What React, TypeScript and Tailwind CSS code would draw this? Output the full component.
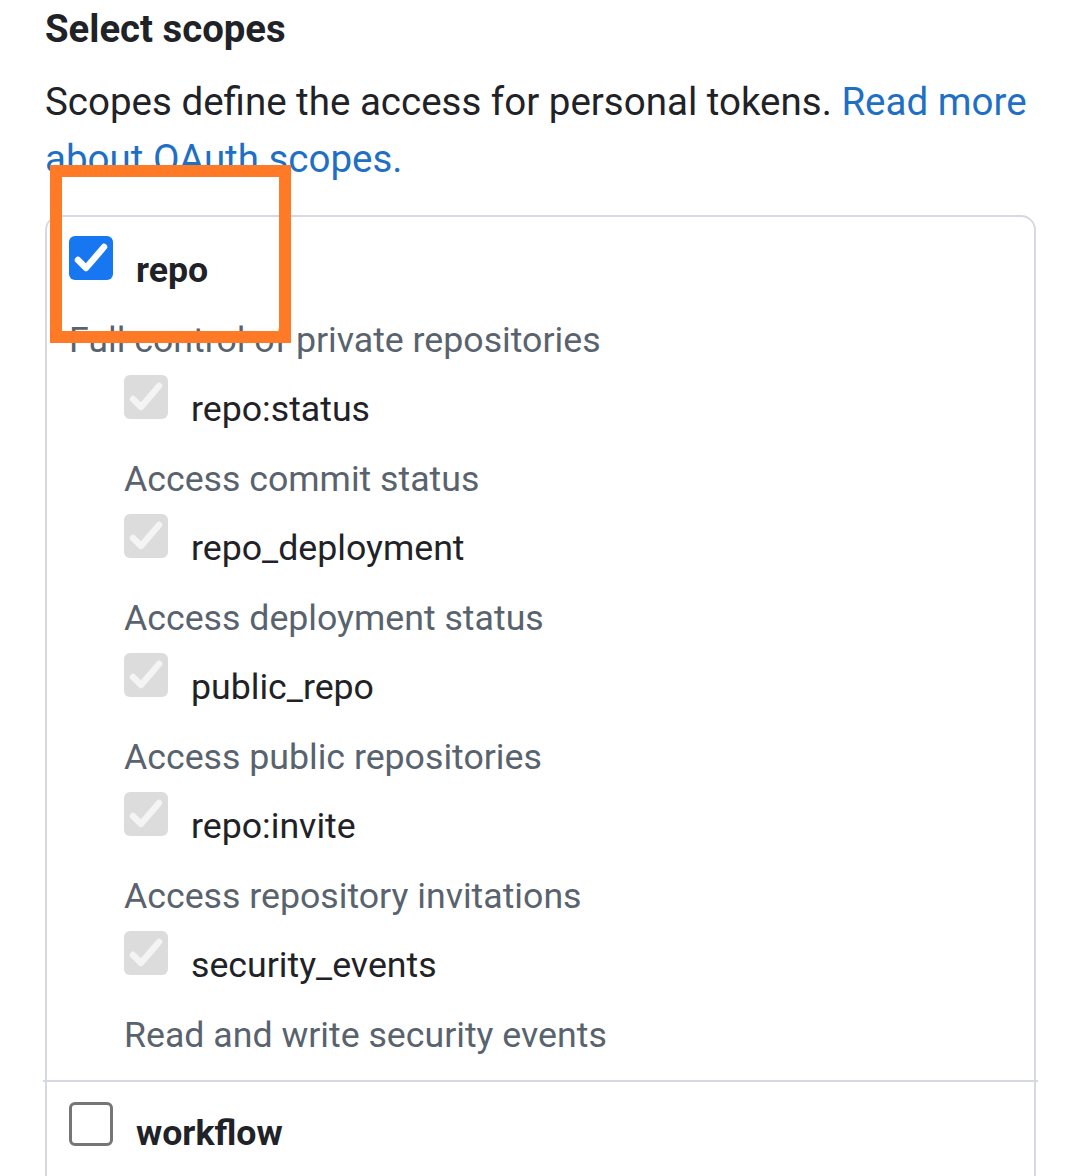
const scopes = [
  { name: "repo:status", desc: "Access commit status" },
  { name: "repo_deployment", desc: "Access deployment status" },
  { name: "public_repo", desc: "Access public repositories" },
  { name: "repo:invite", desc: "Access repository invitations" },
  { name: "security_events", desc: "Read and write security events" },
];

function CheckMark({ color }: { color: string }) {
  return (
    <svg viewBox="0 0 44 44" className="w-[44px] h-[44px]">
      <polyline
        points="9,24 17,32 35,11"
        fill="none"
        stroke={color}
        strokeWidth="6.5"
        strokeLinecap="round"
        strokeLinejoin="round"
      />
    </svg>
  );
}

function Box({ state }: { state: "checked" | "disabled" | "empty" }) {
  if (state === "checked") {
    return (
      <div className="w-[44px] h-[44px] shrink-0 rounded-[6px] bg-[#1677f0]">
        <CheckMark color="#ffffff" />
      </div>
    );
  }
  if (state === "disabled") {
    return (
      <div className="w-[44px] h-[44px] shrink-0 rounded-[6px] bg-[#dcdcdc]">
        <CheckMark color="#f4f4f4" />
      </div>
    );
  }
  return (
    <div className="w-[44px] h-[44px] shrink-0 rounded-[6px] border-[3px] border-[#767676] bg-white" />
  );
}

export default function App() {
  return (
    <div
      className="relative w-[1080px] h-[1176px] overflow-hidden bg-white text-[#1f2328]"
      style={{ fontFamily: "Roboto, 'Noto Sans', sans-serif" }}
    >
      <div className="pl-[45px] pr-[44px] pt-[7px]">
        <h2 className="text-[38.3px] leading-[44px] font-bold">Select scopes</h2>
        <p className="mt-[22px] text-[38.5px] leading-[57px]">
          Scopes define the access for personal tokens.{" "}
          <a className="text-[#1f6fc5]">Read more about OAuth scopes.</a>
        </p>

        {/* Scope list */}
        <div className="mt-[28px] border-2 border-[#d6dae0] rounded-[15px] h-[1100px]">
          <div className="px-[22px] pt-[19px] pb-[10px]">
            <div className="flex gap-[23px]">
              <Box state="checked" />
              <span className="mt-[9px] text-[35.7px] leading-[50px] font-bold">repo</span>
            </div>
            <div className="mt-[20px] text-[35.7px] leading-[50px] text-[#59636e]">
              Full control of private repositories
            </div>
            <div className="mt-[10px] pl-[55px]">
              {scopes.map((s) => (
                <div key={s.name} className="mb-[10px]">
                  <div className="flex gap-[23px]">
                    <Box state="disabled" />
                    <span className="mt-[9px] text-[35.7px] leading-[50px]">{s.name}</span>
                  </div>
                  <div className="mt-[20px] text-[35.7px] leading-[50px] text-[#59636e]">
                    {s.desc}
                  </div>
                </div>
              ))}
            </div>
          </div>
          <div className="-mx-[4px] border-t-2 border-[#d6dae0]" />
          <div className="px-[22px] pt-[20px] flex gap-[23px]">
            <Box state="empty" />
            <span className="mt-[6px] text-[35.7px] leading-[50px] font-bold">workflow</span>
          </div>
        </div>
      </div>

      {/* annotation highlight */}
      <div className="absolute left-[50px] top-[165px] w-[241px] h-[178px] border-[12px] border-[#ff7a26]" />
    </div>
  );
}
